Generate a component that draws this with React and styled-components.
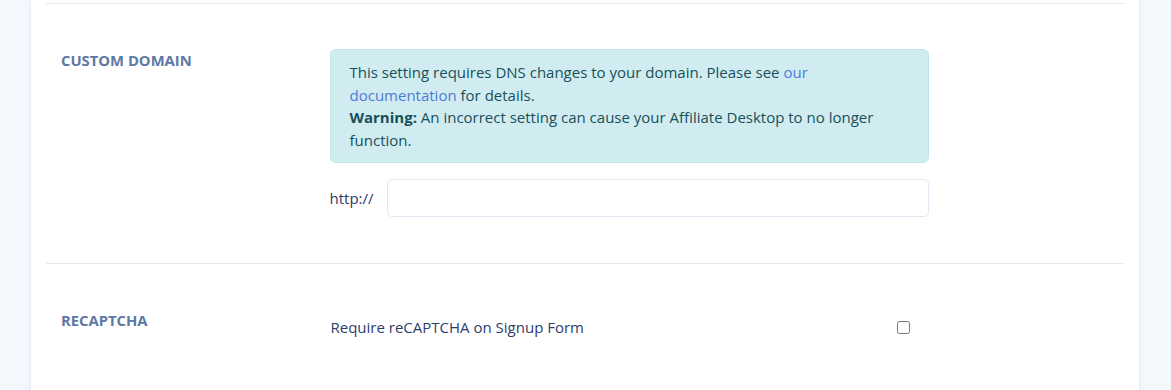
import React from 'react';
import styled, { createGlobalStyle } from 'styled-components';

const GlobalStyle = createGlobalStyle`
  body {
    margin: 0;
    background: #f4f7fc;
    font-family: "Open Sans", "Liberation Sans", sans-serif;
  }
`;

const Page = styled.div`
  height: 390px;
  overflow: hidden;
  padding: 0 32px 0 31px;
`;

const Card = styled.div`
  background: #fff;
  min-height: 390px;
  padding: 3px 15px 0;
  box-shadow: 0 0 4px rgba(160, 180, 225, 0.35);
`;

const Row = styled.div`
  display: grid;
  grid-template-columns: 25% 58.333%;
  border-top: 1px solid #e4e9f2;
  padding: 45px 0 46px;
`;

const Label = styled.div`
  padding: 0 15px;
  font-size: 14.8px;
  line-height: 22px;
  font-weight: 700;
  text-transform: uppercase;
  color: #5d78a4;
`;

const Content = styled.div`
  padding: ${p => (p.$offset ? '7px 15px 0' : '0 15px 0 14px')};
`;

const Alert = styled.div`
  background: #d1ecf1;
  border: 1px solid #bee5eb;
  border-radius: 6px;
  padding: 11px 19px;
  color: #17505a;
  font-size: 15px;
  line-height: 22.5px;
  margin-bottom: 16px;

  a {
    color: #4d7ad6;
    text-decoration: none;
  }
`;

const InputRow = styled.div`
  display: flex;
  align-items: center;
  gap: 13px;
  font-size: 15px;
  color: #2d3b6a;
`;

const TextInput = styled.input`
  flex: 1;
  height: 38px;
  box-sizing: border-box;
  border: 1px solid #e2e8f4;
  border-radius: 5px;
  outline: none;
`;

const CheckRow = styled.label`
  display: flex;
  align-items: center;
  justify-content: space-between;
  font-size: 15px;
  line-height: 22.5px;
  color: #2e3d6c;

  input {
    margin: 0 19px 0 0;
    width: 13px;
    height: 13px;
  }
`;

export default function App() {
  return (
    <>
      <GlobalStyle />
      <Page>
        <Card>
          <Row>
            <Label>Custom Domain</Label>
            <Content>
              <Alert>
                This setting requires DNS changes to your domain. Please see{' '}
                <a href="#">our documentation</a> for details.
                <br />
                <strong>Warning:</strong> An incorrect setting can cause your Affiliate Desktop to no longer function.
              </Alert>
              <InputRow>
                <span>http://</span>
                <TextInput type="text" />
              </InputRow>
            </Content>
          </Row>
          <Row>
            <Label>reCAPTCHA</Label>
            <Content $offset>
              <CheckRow>
                <span>Require reCAPTCHA on Signup Form</span>
                <input type="checkbox" />
              </CheckRow>
            </Content>
          </Row>
        </Card>
      </Page>
    </>
  );
}
